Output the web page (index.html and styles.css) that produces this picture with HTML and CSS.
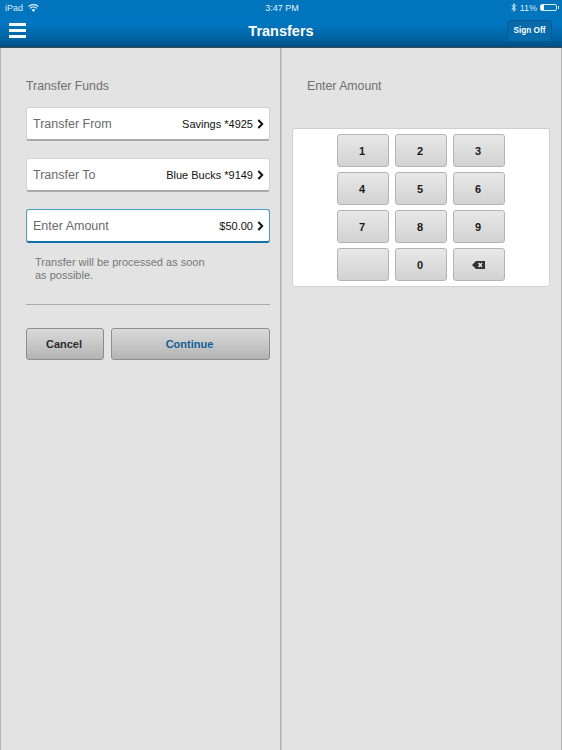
FILE: index.html
```html
<!DOCTYPE html>
<html lang="en">
<head>
<meta charset="utf-8">
<title>Transfers</title>
<link rel="stylesheet" href="styles.css">
</head>
<body>
<div class="app">
  <header class="header">
    <div class="status">
      <div class="status-left">
        <span>iPad</span>
        <svg class="wifi" width="11" height="8" viewBox="0 0 11 8"><path d="M5.5 8 3.6 5.800a2.800 2.800 0 0 1 3.800 0z" fill="#e4f0f8"/><path d="M2.200 4.400a4.800 4.800 0 0 1 6.600 0M.6 2.600a7.200 7.200 0 0 1 9.800 0" fill="none" stroke="#e4f0f8" stroke-width="1.300"/></svg>
      </div>
      <div class="status-time">3:47 PM</div>
      <div class="status-right">
        <svg class="bt" width="6" height="9" viewBox="0 0 6 9"><path d="M.6 2.300 4.800 6.300 2.800 8.300V.7l2 2L.6 6.700" fill="none" stroke="#e4f0f8" stroke-width="1"/></svg>
        <span>11%</span>
        <span class="battery"><span class="battery-level"></span></span>
      </div>
    </div>
    <div class="navbar">
      <button class="menu" aria-label="Menu"><span></span><span></span><span></span></button>
      <h1 class="title">Transfers</h1>
      <button class="signoff">Sign Off</button>
    </div>
  </header>
  <main class="panes">
    <section class="pane pane-left">
      <h2 class="pane-title">Transfer Funds</h2>
      <div class="field">
        <span class="field-label">Transfer From</span>
        <span class="field-value">Savings *4925</span>
        <svg class="chev" width="7" height="10" viewBox="0 0 7 10"><path d="M1.300 1 5.200 5 1.300 9" fill="none" stroke="#111" stroke-width="2"/></svg>
      </div>
      <div class="field">
        <span class="field-label">Transfer To</span>
        <span class="field-value">Blue Bucks *9149</span>
        <svg class="chev" width="7" height="10" viewBox="0 0 7 10"><path d="M1.300 1 5.200 5 1.300 9" fill="none" stroke="#111" stroke-width="2"/></svg>
      </div>
      <div class="field field-active">
        <span class="field-label">Enter Amount</span>
        <span class="field-value">$50.00</span>
        <svg class="chev" width="7" height="10" viewBox="0 0 7 10"><path d="M1.300 1 5.200 5 1.300 9" fill="none" stroke="#111" stroke-width="2"/></svg>
      </div>
      <p class="note">Transfer will be processed as soon<br>as possible.</p>
      <hr class="divider">
      <div class="actions">
        <button class="btn btn-cancel">Cancel</button>
        <button class="btn btn-continue">Continue</button>
      </div>
    </section>
    <section class="pane pane-right">
      <h2 class="pane-title pane-title-right">Enter Amount</h2>
      <div class="keypad-card">
        <div class="keypad">
          <button class="key">1</button>
          <button class="key">2</button>
          <button class="key">3</button>
          <button class="key">4</button>
          <button class="key">5</button>
          <button class="key">6</button>
          <button class="key">7</button>
          <button class="key">8</button>
          <button class="key">9</button>
          <button class="key" aria-label="Blank"></button>
          <button class="key">0</button>
          <button class="key" aria-label="Delete">
            <svg width="13" height="8" viewBox="0 0 13 8"><path d="M4 0H13V8H4L0 4z" fill="#333"/><path d="M6.500 2 10 6M10 2 6.500 6" stroke="#eee" stroke-width="1.400"/></svg>
          </button>
        </div>
      </div>
    </section>
  </main>
</div>
</body>
</html>
```
FILE: styles.css
```css
* { box-sizing: border-box; }
html, body { margin: 0; padding: 0; }
body {
  width: 562px;
  height: 750px;
  overflow: hidden;
  font-family: "Liberation Sans", Arial, sans-serif;
  background: #e3e3e3;
}
button { font-family: inherit; padding: 0; margin: 0; }
.app { display: flex; flex-direction: column; height: 750px; }
.header {
  height: 48px;
  flex: none;
  background: linear-gradient(#0074bc 0, #0076c0 50%, #00619f 85%, #004d80 100%);
  border-bottom: 1px solid #3c4a55;
  color: #fff;
}
.status {
  height: 15px;
  display: grid;
  grid-template-columns: 1fr auto 1fr;
  align-items: center;
  font-size: 9px;
  color: #dcebf5;
  padding: 0 5px 0 5px;
}
.status-left { display: flex; align-items: center; gap: 5px; }
.status-time { color: #e8f2f9; padding-left: 2px; }
.status-right { display: flex; align-items: center; justify-content: flex-end; gap: 3px; }
.battery {
  width: 17px;
  height: 7px;
  border: 1px solid #dcebf5;
  border-radius: 2px;
  display: block;
  position: relative;
}
.battery::after {
  content: "";
  position: absolute;
  right: -3px;
  top: 1px;
  width: 1px;
  height: 3px;
  background: #dcebf5;
}
.battery-level { display: block; width: 3px; height: 100%; background: #fff; }
.navbar {
  height: 32px;
  display: flex;
  align-items: center;
  justify-content: space-between;
  position: relative;
  padding: 0 10px 0 9px;
}
.menu {
  width: 17px;
  height: 15px;
  background: none;
  border: 0;
  display: flex;
  flex-direction: column;
  justify-content: space-between;
  margin-top: -2px;
}
.menu span { display: block; height: 3px; background: #f2f8fc; width: 100%; }
.title {
  position: absolute;
  left: 0;
  right: 0;
  top: 8px;
  margin: 0;
  text-align: center;
  font-size: 14.500px;
  line-height: 17px;
  font-weight: 700;
  color: #fff;
  pointer-events: none;
}
.signoff {
  width: 45px;
  height: 22px;
  border: 1px solid #0a5a90;
  border-radius: 4px;
  background: #066aab;
  color: #fff;
  font-size: 8.200px;
  font-weight: 700;
  margin-top: -1px;
}
.panes { flex: 1; display: flex; min-height: 0; border-left: 1px solid #b5b5b5; border-right: 1px solid #b5b5b5; }
.pane { background: #e3e3e3; }
.pane-left { width: 280px; flex: none; padding: 0 10px 0 25px; border-right: 1px solid #b0b0b0; }
.pane-right { flex: 1; padding: 0 11px 0 10px; border-left: 1px solid #c9c9c9; }
.pane-title {
  margin: 0;
  padding-top: 31px;
  font-size: 12.300px;
  line-height: 14px;
  font-weight: 400;
  color: #6f6f6f;
}
.pane-title-right { padding-left: 15px; }
.field {
  height: 34px;
  background: #fff;
  border: 1px solid #d4d4d4;
  border-bottom: 2px solid #a9a9a9;
  border-radius: 3px;
  display: flex;
  align-items: center;
  padding: 0 5px 0 6px;
  margin-top: 17px;
}
.pane-title + .field { margin-top: 14px; }
.field-label { flex: 1; font-size: 12.500px; color: #6a6a6a; }
.field-value { font-size: 11px; color: #111; margin-right: 4px; }
.chev { display: block; flex: none; }
.field-active { border-color: #4a9bcb; border-bottom-color: #0f70ad; }
.note {
  margin: 13px 0 0 9px;
  font-size: 11px;
  line-height: 13px;
  color: #777;
}
.divider { border: 0; height: 1px; background: #ababab; margin: 22px 0 0; }
.actions { display: flex; gap: 7px; margin-top: 23px; }
.btn {
  height: 32px;
  border: 1px solid #8d8d8d;
  border-radius: 3px;
  background: linear-gradient(#dadada, #b4b4b4);
  font-size: 11px;
  font-weight: 700;
  padding: 0 2px 0 0;
}
.btn-cancel { width: 78px; flex: none; color: #2c2c2c; }
.btn-continue { flex: 1; color: #125f97; }
.keypad-card {
  margin-top: 35px;
  height: 159px;
  background: #fff;
  border: 1px solid #cfcfcf;
  border-radius: 3px;
  padding: 5px 0 0 44px;
}
.keypad {
  display: grid;
  grid-template-columns: repeat(3, 52px);
  grid-auto-rows: 33px;
  gap: 5px 6px;
}
.key {
  border: 1px solid #b4b4b4;
  border-radius: 3px;
  background: linear-gradient(#e8e8e8, #d2d2d2);
  font-size: 11px;
  font-weight: 700;
  color: #1a1a1a;
  display: flex;
  align-items: center;
  justify-content: center;
  padding: 0 2px 0 0;
}
```
